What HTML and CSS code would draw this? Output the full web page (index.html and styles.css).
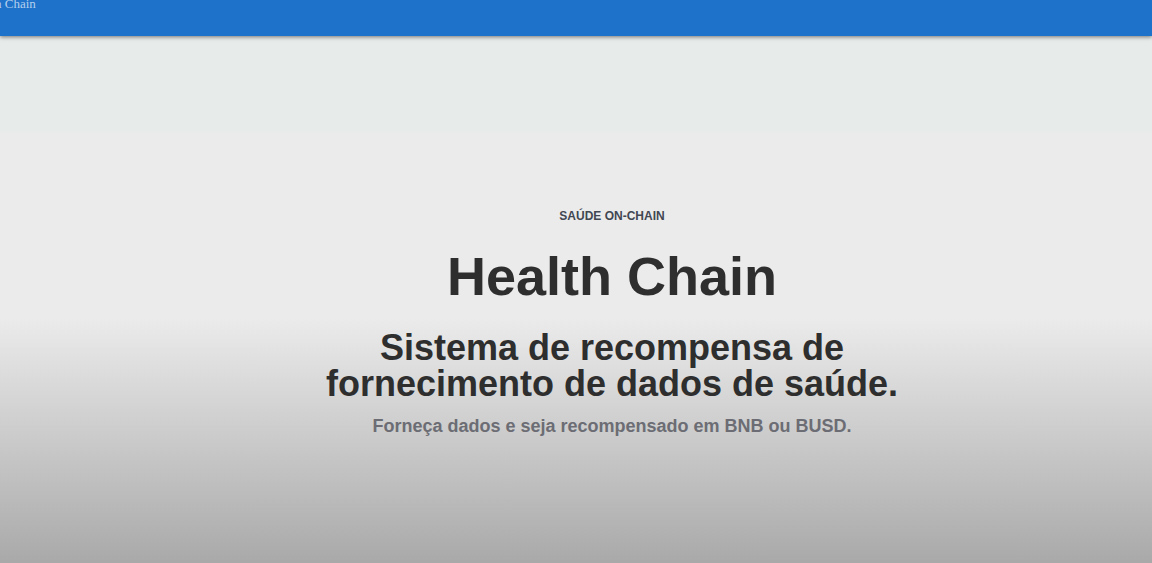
FILE: index.html
```html
<!DOCTYPE html>
<html lang="pt-BR">
<head>
<meta charset="utf-8">
<meta name="viewport" content="width=device-width, initial-scale=1">
<title>Health Chain</title>
<link rel="stylesheet" href="styles.css">
</head>
<body>
<header class="bar"><span class="brand">h Chain</span></header>
<main class="hero">
<p class="eyebrow">SAÚDE ON-CHAIN</p>
<h1 class="title">Health Chain</h1>
<h2 class="subtitle">Sistema de recompensa de fornecimento de dados de saúde.</h2>
<p class="lead">Forneça dados e seja recompensado em BNB ou BUSD.</p>
</main>
</body>
</html>
```

FILE: styles.css
```css
* { box-sizing: border-box; margin: 0; }
body {
  min-height: 100vh;
  display: flex;
  flex-direction: column;
  overflow-x: hidden;
  font-family: "Liberation Sans", Arial, sans-serif;
  background: linear-gradient(#e7ebe9 0, #e7ebe9 130px, #ebebeb 134px, #ebebeb 318px, #a9a9a9 100%);
}
.bar {
  height: 36px;
  background: #1f72c9;
  box-shadow: 0 1px 4px rgba(0, 0, 0, 0.5);
}
.brand {
  display: block;
  margin: -4px 0 0 -5px;
  font: 13px/16px "Liberation Serif", "Times New Roman", serif;
  color: #b4d0ee;
}
.hero {
  flex: 1;
  padding: 172px 0 24px 72px;
  display: flex;
  flex-direction: column;
  align-items: center;
  text-align: center;
  color: #2e2e2e;
}
.eyebrow { font-size: 12px; line-height: 16px; font-weight: 700; color: #414752; }
.title { margin-top: 20px; font-size: 54px; line-height: 64px; }
.subtitle { max-width: 600px; margin-top: 22px; font-size: 36px; line-height: 36px; }
.lead { margin-top: 12px; font-size: 18px; line-height: 24px; font-weight: 700; color: #6c6d74; }
```
